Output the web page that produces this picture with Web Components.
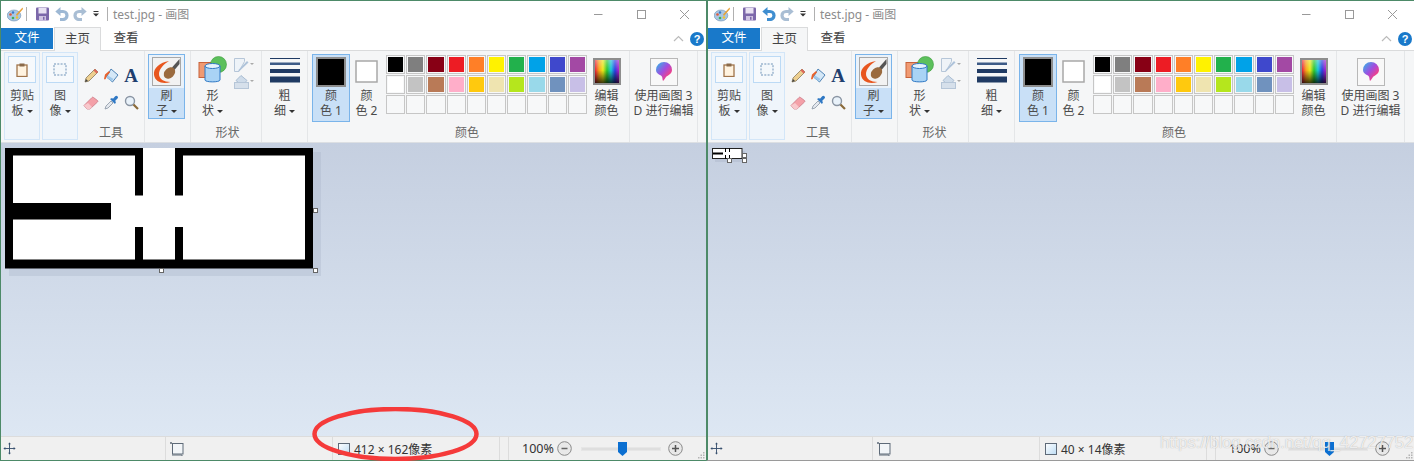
<!DOCTYPE html>
<html lang="zh">
<head>
<meta charset="utf-8">
<title>test.jpg - 画图</title>
<style>
	html, body {
		margin: 0;
		height: 461px;
		overflow: hidden;
		background: #fff;
		font-family: "Noto Sans", "Noto Sans CJK SC", sans-serif;
	}
	body {
		display: flex;
		position: relative;
		width: 1414px;
	}
	.mark {
		position: absolute;
		left: 312px;
		top: 407px;
		pointer-events: none;
	}
	.water {
		position: absolute;
		left: 1160px;
		top: 432px;
		font: 16.5px/20px "Liberation Sans", sans-serif;
		color: rgba(255, 255, 255, .78);
		text-shadow: 0 0 1px rgba(120, 120, 120, .6);
		white-space: nowrap;
	}
</style>
</head>
<body>
	<paint-window size="412 × 162像素" img-w="308" img-h="120" style="width:706px;--edge:1px;--foot:#4d8a68;--undo:#9db8d4">
		<svg slot="canvas" width="316" height="128" viewBox="0 0 316 128">
			<rect x="4" y="4" width="312" height="124" fill="#a9b4c8" opacity=".35"/>
			<rect width="308" height="120.500" fill="#000"/>
			<rect x="8" y="7.500" width="292" height="104" fill="#fff"/>
			<rect x="130" y="0" width="8" height="47.500"/>
			<rect x="170" y="0" width="8" height="47.500"/>
			<rect x="130" y="79" width="8" height="35"/>
			<rect x="170" y="79" width="8" height="35"/>
			<rect x="138" y="0" width="32" height="8" fill="#fff"/>
			<rect x="0" y="55" width="106" height="16.500"/>
		</svg>
	</paint-window>
	<paint-window size="40 × 14像素" img-w="30" img-h="10" style="width:708px;--edge:2px;--foot:#9a9a9a;--undo:#3f8ed0">
		<svg slot="canvas" width="36" height="14" viewBox="0 0 36 14">
			<rect x="3" y="3" width="30" height="11" fill="#a9b4c8" opacity=".4"/>
			<rect x=".5" y=".5" width="29.500" height="10" fill="#fff" stroke="#222" stroke-width="1"/>
			<rect x="1" y="4.500" width="10" height="2" fill="#000"/>
			<rect x="13" y="0" width="1" height="4" fill="#000"/>
			<rect x="17" y="0" width="1" height="4" fill="#000"/>
			<rect x="13" y="7" width="1" height="4" fill="#000"/>
			<rect x="17" y="7" width="1" height="4" fill="#000"/>
		</svg>
	</paint-window>

	<svg class="mark" width="168" height="54" viewBox="0 0 168 54">
		<ellipse cx="83.500" cy="27" rx="81" ry="25" fill="none" stroke="#f53a3a" stroke-width="4.500"/>
	</svg>
	<div class="water">https://blog.csdn.net/qq_42727752</div>

<template id="tpl-caret">
	<style>
		:host {
			display: inline-block;
			width: 0;
			height: 0;
			margin-left: 3px;
			vertical-align: 2px;
			border: 3px solid transparent;
			border-top-color: #333;
			border-bottom-width: 0;
		}
	</style>
</template>

<template id="tpl-btn">
	<style>
		:host {
			display: flex;
			flex-direction: column;
			align-items: center;
			box-sizing: border-box;
			flex: none;
			border: 1px solid transparent;
			font-size: 12px;
			line-height: 15px;
			color: #4a4a4a;
		}
		.icon {
			display: flex;
			align-items: center;
			justify-content: center;
			box-sizing: border-box;
			height: 33px;
			width: 100%;
		}
		.text {
			width: 100%;
			text-align: center;
			white-space: nowrap;
		}
		:host([variant=panel]) {
			height: 88px;
			margin-top: 1px;
			padding-top: 2px;
			border-color: #d3e6f8;
			background: #eff5fb;
		}
		:host([variant=panel]) .icon {
			width: 28px;
			height: 27px;
			margin: 1px 0 5px;
			border: 1px solid #bcdaf5;
			background: #f6f9fc;
		}
		:host([variant=active]) {
			border-color: #7ab4ea;
			background: #eaf2fa;
		}
		:host([variant=active]) .text {
			background: #c9e0f7;
		}
		:host([variant=selected]) {
			border-color: #7ab4ea;
			background: #c9e0f7;
			padding-bottom: 3px;
		}
	</style>
	<div class="icon"><slot name="icon"></slot></div>
	<div class="text"><slot></slot></div>
</template>

<template id="tpl-group">
	<style>
		:host {
			display: flex;
			flex-direction: column;
			box-sizing: border-box;
			flex: none;
			height: 100%;
			padding: 3px 0 1px;
			border-right: 1px solid #e4e6e8;
		}
		.body {
			display: flex;
			flex: 1;
			min-height: 0;
		}
		.label {
			height: 16px;
			font-size: 12px;
			line-height: 16px;
			text-align: center;
			color: #666;
		}
	</style>
	<div class="body"><slot></slot></div>
	<div class="label"></div>
</template>

<template id="tpl-palette">
	<style>
		:host {
			display: grid;
			grid-template-columns: repeat(10, 1fr);
			grid-auto-rows: 19px;
			gap: 1px;
			width: 201px;
			height: 59px;
			flex: none;
			margin: 1px 0 0 3px;
		}
		div {
			box-sizing: border-box;
			border: 1px solid #c6c6c6;
			padding: 1px;
			background: #f7f8f9;
		}
		i {
			display: block;
			height: 100%;
		}
	</style>
</template>

<template id="tpl-status">
	<style>
		:host {
			display: flex;
			flex: none;
			height: 24px;
			box-sizing: border-box;
			border-top: 1px solid #dcdcdc;
			background: #f0f0f0;
			font-size: 12px;
			color: #333;
		}
		section {
			display: flex;
			align-items: center;
			box-sizing: border-box;
			flex: none;
			border-right: 1px solid #dcdcdc;
		}
		.a { width: 165px; padding-left: 2px; }
		.b { width: 167px; padding-left: 4px; }
		.c { width: 167px; padding-left: 4px; gap: 3px; }
		.d { width: 9px; }
		.e { flex: 1; border: 0; padding-left: 13px; position: relative; font-size: 12.5px; }
		.pct { width: 35px; }
		.track {
			position: relative;
			width: 80px;
			height: 4px;
			margin: 0 7px 0 9px;
			background: #dedede;
			border: 1px solid #e6e6e6;
			box-sizing: border-box;
		}
		.thumb {
			position: absolute;
			left: 36px;
			top: -6px;
		}
		.grip {
			position: absolute;
			right: 1px;
			bottom: 1px;
		}
	</style>
	<section class="a">
		<svg width="13" height="13" viewBox="0 0 14 14" fill="none" stroke="#38506e" stroke-width="1">
			<path d="M1 7h12M7 1v12"/>
			<path d="M7 .5 5.500 2.500h3zM7 13.500l-1.500-2h3zM.5 7l2-1.500v3zM13.500 7l-2-1.500v3z" fill="#38506e" stroke="none"/>
		</svg>
	</section>
	<section class="b">
		<svg width="14" height="14" viewBox="0 0 14 14" fill="none">
			<rect x="2.500" y="1.500" width="10.500" height="10.500" fill="#f2f5f8" stroke="#5e6a78"/>
			<path d="M1 0v2M0 1h2M12 13v1M2 13h10" stroke="#5e6a78"/>
		</svg>
	</section>
	<section class="c">
		<svg width="14" height="14" viewBox="0 0 14 14">
			<defs><linearGradient id="pg" x1="0" y1="0" x2="1" y2="1"><stop offset="0" stop-color="#fff"/><stop offset="1" stop-color="#bcdcf4"/></linearGradient></defs>
			<rect x="1.500" y="1.500" width="11" height="11" fill="url(#pg)" stroke="#5e6a78"/>
		</svg>
		<span class="size"></span>
	</section>
	<section class="d"></section>
	<section class="e">
		<span class="pct">100%</span>
		<svg width="15" height="15" viewBox="0 0 15 15" fill="#e8e8e8" stroke="#8a8a8a">
			<circle cx="7.500" cy="7.500" r="6.800"/>
			<path d="M4.500 7.500h6" stroke="#666" stroke-width="1.500"/>
		</svg>
		<div class="track">
			<svg class="thumb" width="9" height="14" viewBox="0 0 9 14"><path d="M0 0h9v10l-4.500 4L0 10z" fill="#0b6fd1"/></svg>
		</div>
		<svg width="15" height="15" viewBox="0 0 15 15" fill="#e8e8e8" stroke="#8a8a8a">
			<circle cx="7.500" cy="7.500" r="6.800"/>
			<path d="M4 7.500h7M7.500 4v7" stroke="#555" stroke-width="1.500"/>
		</svg>
		<svg class="grip" width="7" height="7" viewBox="0 0 7 7" fill="#b4b4b4">
			<rect x="5" y="0" width="1.500" height="1.500"/><rect x="2.500" y="2.500" width="1.500" height="1.500"/><rect x="5" y="2.500" width="1.500" height="1.500"/>
			<rect x="0" y="5" width="1.500" height="1.500"/><rect x="2.500" y="5" width="1.500" height="1.500"/><rect x="5" y="5" width="1.500" height="1.500"/>
		</svg>
	</section>
</template>

<template id="tpl-window">
	<style>
		:host {
			display: flex;
			flex-direction: column;
			flex: none;
			box-sizing: border-box;
			height: 461px;
			border-top: 1px solid #4d8a68;
			border-left: var(--edge) solid #4d8a68;
			border-bottom: 1px solid var(--foot);
			font-family: "Noto Sans", "Noto Sans CJK SC", sans-serif;
			background: #fff;
		}
		* { box-sizing: border-box; }
		.title {
			display: flex;
			align-items: center;
			flex: none;
			height: 26px;
			padding-left: 6px;
		}
		.title > svg { flex: none; }
		.sep { width: 1px; height: 14px; background: #b0b0b0; flex: none; }
		.name { font-size: 12px; color: #8c8c8c; margin-left: 5px; white-space: nowrap; }
		.ctrls { display: flex; margin-left: auto; }
		.ctrls div { width: 43px; height: 26px; display: flex; align-items: center; justify-content: center; }
		.tabs {
			display: flex;
			align-items: stretch;
			flex: none;
			height: 23px;
			font-size: 12.5px;
			line-height: 22px;
			color: #444;
		}
		.file {
			width: 52px;
			height: 21px;
			margin-top: 1px;
			background: #1979ca;
			color: #fff;
			text-align: center;
			line-height: 20px;
		}
		.home {
			width: 47px;
			margin-left: 1px;
			text-align: center;
			border: 1px solid #dadbdc;
			border-bottom: 0;
			background: #f5f6f7;
			position: relative;
			z-index: 1;
			height: 24px;
		}
		.view { width: 50px; text-align: center; }
		.tabr { margin-left: auto; display: flex; align-items: center; gap: 6px; padding-right: 2px; }
		.help {
			width: 14px;
			height: 14px;
			border-radius: 50%;
			background: #1979ca;
			color: #fff;
			font: bold 11px/14px "Liberation Sans", sans-serif;
			text-align: center;
		}
		.ribbon {
			display: flex;
			flex: none;
			height: 93px;
			padding-left: 3px;
			background: #f5f6f7;
			border-top: 1px solid #dadbdc;
			border-bottom: 1px solid #dcdfe3;
		}
		.tools {
			display: grid;
			grid-template-columns: repeat(3, 20px);
			grid-auto-rows: 27px;
			margin: 8px 0 0 3px;
			justify-items: center;
			align-items: center;
			height: 54px;
		}
		.bigA { font: bold 19px/1 "Liberation Serif", serif; color: #1f3f6f; }
		.small { display: flex; flex-direction: column; gap: 3px; margin: 4px 0 0 3px; }
		.rainbow {
			display: block;
			width: 28px;
			height: 27px;
			border: 2px solid #8d8d8d;
			background: linear-gradient(to bottom, rgba(255,255,255,.35), rgba(255,255,255,0) 45%, rgba(0,0,0,.75)), linear-gradient(to right, #e81c3c, #f7a11a, #e9e91a, #2cc42c, #18c6d8, #2a3fe0, #b41cc8);
		}
		.canvas {
			flex: 1;
			min-height: 0;
			padding: 5px 0 0 4px;
			display: flex;
			background: linear-gradient(to bottom, #c5cfe0, #dde7f3);
			overflow: hidden;
		}
		.sheet { position: relative; height: max-content; }
		.sheet ::slotted(svg) { display: block; }
		.handle {
			position: absolute;
			width: 5px;
			height: 5px;
			border: 1px solid #666;
			background: #fff;
		}
	</style>
	<div class="title">
		<svg width="16" height="15" viewBox="0 0 16 15">
			<ellipse cx="7" cy="8.500" rx="6.800" ry="5.500" fill="#a9c7e3" stroke="#6d8fb0" stroke-width=".6"/>
			<circle cx="3.500" cy="7.500" r="1.300" fill="#e0583a"/>
			<circle cx="6" cy="11" r="1.300" fill="#3fae5a"/>
			<circle cx="10" cy="10.500" r="1.300" fill="#f1c232"/>
			<circle cx="6" cy="5.500" r="1.200" fill="#3b78c8"/>
			<path d="M15.500 .5 9 7.500 10 9l6-7z" fill="#e8a23a"/>
		</svg>
		<div class="sep" style="margin-left:3px"></div>
		<svg style="margin-left:9px" width="13" height="14" viewBox="0 0 13 14">
			<rect x="0" y="0.500" width="13" height="13" rx="1" fill="#7c68aa"/>
			<rect x="2.500" y="1" width="8" height="5.500" fill="#e8e2f2"/>
			<rect x="3" y="9" width="7" height="4.500" fill="#cfc4e2"/>
			<rect x="7" y="9.800" width="1.500" height="3" fill="#7c68aa"/>
		</svg>
		<svg style="margin-left:6px" width="14" height="14" viewBox="0 0 14 14" fill="none" stroke="var(--undo)" stroke-width="3.200">
			<path d="M3 4.500h5a3.800 3.800 0 0 1 0 8H5"/>
			<path d="M5.500 0 .3 4.500 5.500 9z" fill="var(--undo)" stroke="none"/>
		</svg>
		<svg style="margin-left:4px" width="14" height="14" viewBox="0 0 14 14" fill="none" stroke="#a9bed4" stroke-width="3.200">
			<path d="M11 4.500H6a3.800 3.800 0 0 0 0 8h3"/>
			<path d="M8.500 0l5.200 4.500L8.500 9z" fill="#a9bed4" stroke="none"/>
		</svg>
		<svg style="margin-left:6px" width="7" height="6" viewBox="0 0 7 6" fill="#333">
			<rect x="0.500" y="0" width="5" height="1"/><path d="M0 2.500h6L3 5.500z"/>
		</svg>
		<div class="sep" style="margin-left:7px"></div>
		<span class="name">test.jpg - 画图</span>
		<div class="ctrls">
			<div><svg width="11" height="11" viewBox="0 0 11 11"><path d="M1 5.500h8.500" stroke="#999"/></svg></div>
			<div><svg width="11" height="11" viewBox="0 0 11 11"><rect x="1.500" y="1.500" width="8" height="8" fill="none" stroke="#999"/></svg></div>
			<div><svg width="11" height="11" viewBox="0 0 11 11"><path d="M1 1l9 9M10 1l-9 9" stroke="#999"/></svg></div>
		</div>
	</div>
	<div class="tabs">
		<div class="file">文件</div>
		<div class="home">主页</div>
		<div class="view">查看</div>
		<div class="tabr">
			<svg width="11" height="7" viewBox="0 0 11 7"><path d="M1 6l4.500-4.500L10 6" fill="none" stroke="#bbb" stroke-width="1.200"/></svg>
			<div class="help">?</div>
		</div>
	</div>
	<div class="ribbon">
		<ribbon-btn variant="panel" style="width:36px">
			<svg slot="icon" width="12" height="14" viewBox="0 0 12 14">
				<rect x="1" y="2" width="10" height="11.500" fill="#fff3e0" stroke="#a0744a" stroke-width="1.300"/>
				<rect x="3.500" y="0.500" width="5" height="3" fill="#8a6a4a"/>
			</svg>
			剪贴<br>板<drop-caret></drop-caret>
		</ribbon-btn>
		<ribbon-btn variant="panel" style="width:36px;margin-left:2px">
			<svg slot="icon" width="14" height="13" viewBox="0 0 14 13">
				<rect x="1" y="1" width="12" height="11" fill="#f4f8fb" stroke="#6f93b8" stroke-dasharray="2 1.300"/>
			</svg>
			图<br>像<drop-caret></drop-caret>
		</ribbon-btn>
		<ribbon-group label="工具" style="width:67px">
			<div class="tools">
				<svg width="15" height="15" viewBox="0 0 15 15">
					<path d="M1 14l1-4L11 1l3 3-9 9z" fill="#edcf8f" stroke="#8a7a5b" stroke-width=".8"/>
					<path d="M11 1l3 3-1.500 1.500-3-3z" fill="#e0685a"/>
					<path d="M1 14l1-3 2 2z" fill="#444"/>
				</svg>
				<svg width="16" height="15" viewBox="0 0 16 15">
					<path d="M8 1l7 6-5.500 7-6-5z" fill="#d5e8f7" stroke="#4f83b5"/>
					<path d="M5 7.500l5.500 3.500 -2 2.500-4.500-4z" fill="#9fc8ea"/>
					<path d="M6 3 2 6.500 1 11c1 1 2 0 2-1l1-2.500 3-3z" fill="#e8622c"/>
				</svg>
				<span class="bigA">A</span>
				<svg width="16" height="14" viewBox="0 0 16 14">
					<path d="M1 9.500 9 1.500c.5-.5 1-.5 1.500 0l4 3c.5.400.5 1 0 1.500L7 13H4z" fill="#f4a0a8" stroke="#c97a86" stroke-width=".8"/>
					<path d="M1 9.500 4 13h3l2-2-4-4z" fill="#f8c8cc"/>
				</svg>
				<svg width="15" height="15" viewBox="0 0 15 15">
					<path d="M1 14l1-3 5-5 2 2-5 5z" fill="#e4e8ee" stroke="#8a95a3" stroke-width=".8"/>
					<path d="M6 4l5 5 1-2-1-1 2.500-2.500a1.600 1.600 0 0 0-2.300-2.300L9 3.700 8 3z" fill="#2f78c4"/>
				</svg>
				<svg width="15" height="15" viewBox="0 0 15 15" fill="none">
					<circle cx="6" cy="6" r="4.500" fill="#e9f2fa" stroke="#8a95a3" stroke-width="1.400"/>
					<path d="M9.500 9.500 14 14" stroke="#8a6a3a" stroke-width="2.200"/>
				</svg>
			</div>
		</ribbon-group>
		<ribbon-group style="width:46px;padding-left:3px">
			<ribbon-btn variant="active" style="width:37px;height:65px">
				<svg slot="icon" width="29" height="29" viewBox="0 0 29 29">
					<rect x=".5" y=".5" width="28" height="28" fill="#f2f2f2" stroke="#a8a8a8"/>
					<path d="M27.500 2 20 10.500l2.500 2.500 5-6z" fill="#555"/>
					<ellipse cx="17.500" cy="16" rx="6.500" ry="4.800" transform="rotate(-45 17.500 16)" fill="#9a6a3e"/>
					<path d="M17 4C8 5.500 1 11 2 18c1 7 9 9.500 16.500 7C12 25 7 22 7 17c0-5 5-10 10-13z" fill="#e8561e"/>
				</svg>
				刷<br>子<drop-caret></drop-caret>
			</ribbon-btn>
		</ribbon-group>
		<ribbon-group label="形状" style="width:71px;padding-left:3px">
			<ribbon-btn style="width:37px">
				<svg slot="icon" width="29" height="29" viewBox="0 0 29 29" style="margin-top:-2px">
					<rect x="1" y="6.500" width="17" height="15" fill="#f09a72" stroke="#c8623a"/>
					<circle cx="20.500" cy="8.500" r="8" fill="#5cc05c" stroke="#3b9a3b" stroke-width=".6"/>
					<path d="M7 10v14c0 2.500 15 2.500 15 0V10z" fill="#a9d3f5" stroke="#2f78c4"/>
					<ellipse cx="14.500" cy="10" rx="7.500" ry="2.500" fill="#e4f2fd" stroke="#2f78c4"/>
				</svg>
				形<br>状<drop-caret></drop-caret>
			</ribbon-btn>
			<div class="small">
				<svg width="20" height="14" viewBox="0 0 20 14">
					<path d="M.5.5h10v3L5 13.500H.5z" fill="#eef3f8" stroke="#b6c6d8"/>
					<path d="M4 12.500 13 3l1.500 1.500L5.500 13z" fill="#aec3da"/>
					<path d="M16 5h4l-2 2z" fill="#aaa"/>
				</svg>
				<svg width="20" height="14" viewBox="0 0 20 14">
					<path d="M7 .5l6 5-5 5-6-5z" fill="#cfdcea" stroke="#a9bdd2"/>
					<rect x=".5" y="7.500" width="14" height="6" fill="#d6e0eb" stroke="#b6c6d8"/>
					<path d="M16 5h4l-2 2z" fill="#aaa"/>
				</svg>
			</div>
		</ribbon-group>
		<ribbon-group style="width:46px">
			<ribbon-btn style="width:45px">
				<svg slot="icon" width="30" height="26" viewBox="0 0 30 26" fill="#1f3a63" style="margin-top:-4px">
					<rect y="1" width="30" height="1"/>
					<rect y="5.500" width="30" height="2.500" fill="#3c5a86"/>
					<rect y="12" width="30" height="4"/>
					<rect y="19.500" width="30" height="6"/>
				</svg>
				粗<br>细<drop-caret></drop-caret>
			</ribbon-btn>
		</ribbon-group>
		<ribbon-group label="颜色" style="width:322px;padding-left:4px;padding-right:7px">
			<ribbon-btn variant="selected" style="width:38px;height:68px">
				<svg slot="icon" width="30" height="30" viewBox="0 0 30 30">
					<rect x="1" y="1" width="28" height="28" fill="#000" stroke="#8d8d8d" stroke-width="2"/>
				</svg>
				颜<br>色 1
			</ribbon-btn>
			<ribbon-btn style="width:33px">
				<svg slot="icon" width="23" height="23" viewBox="0 0 23 23">
					<rect x="1" y="1" width="21" height="21" fill="#fff" stroke="#a8a8a8" stroke-width="1.500"/>
				</svg>
				颜<br>色 2
			</ribbon-btn>
			<color-palette></color-palette>
			<ribbon-btn style="width:33px;margin-left:3px">
				<span slot="icon" class="rainbow"></span>
				编辑<br>颜色
			</ribbon-btn>
		</ribbon-group>
		<ribbon-group style="width:68px;padding-left:2px;padding-right:2px">
			<ribbon-btn style="width:63px">
				<svg slot="icon" width="28" height="28" viewBox="0 0 28 28">
					<defs>
						<linearGradient id="drop" x1="0" y1="0" x2="1" y2="1">
							<stop offset="0" stop-color="#27c0e8"/>
							<stop offset=".45" stop-color="#a04de0"/>
							<stop offset=".75" stop-color="#f0408a"/>
							<stop offset="1" stop-color="#f8a030"/>
						</linearGradient>
					</defs>
					<rect x=".5" y=".5" width="27" height="27" fill="#f8f8f8" stroke="#b8b8b8"/>
					<path d="M14 4a8 8 0 0 1 8 8c0 4-4 5-6 7-1 1-1.500 3-3 4-1-2 0-4-2-5.500C8 16 6 15 6 12a8 8 0 0 1 8-8z" fill="url(#drop)"/>
				</svg>
				使用画图 3<br>D 进行编辑
			</ribbon-btn>
		</ribbon-group>
	</div>
	<div class="canvas">
		<div class="sheet">
			<slot name="canvas"></slot>
			<span class="handle" data-h="r"></span>
			<span class="handle" data-h="b"></span>
			<span class="handle" data-h="c"></span>
		</div>
	</div>
	<status-bar></status-bar>
</template>

<script>
function shadowFrom(el, id) {
	el.attachShadow({ mode: 'open' });
	el.shadowRoot.appendChild(document.getElementById(id).content.cloneNode(true));
	return el.shadowRoot;
}

class DropCaret extends HTMLElement {
	constructor() {
		super();
		shadowFrom(this, 'tpl-caret');
	}
}

class RibbonBtn extends HTMLElement {
	constructor() {
		super();
		shadowFrom(this, 'tpl-btn');
	}
}

class RibbonGroup extends HTMLElement {
	constructor() {
		super();
		shadowFrom(this, 'tpl-group');
	}

	connectedCallback() {
		this.shadowRoot.querySelector('.label').textContent = this.getAttribute('label') || '';
	}
}

class ColorPalette extends HTMLElement {
	static colors = [
		'#000000', '#7f7f7f', '#880015', '#ed1c24', '#ff7f27', '#fff200', '#22b14c', '#00a2e8', '#3f48cc', '#a349a4',
		'#ffffff', '#c3c3c3', '#b97a57', '#ffaec9', '#ffc90e', '#efe4b0', '#b5e61d', '#99d9ea', '#7092be', '#c8bfe7'
	];

	constructor() {
		super();
		const root = shadowFrom(this, 'tpl-palette');
		for (let n = 0; n < 30; n++) {
			const cell = document.createElement('div');
			const color = ColorPalette.colors[n];
			if (color) {
				const fill = document.createElement('i');
				fill.style.background = color;
				cell.appendChild(fill);
			}
			root.appendChild(cell);
		}
	}
}

class StatusBar extends HTMLElement {
	constructor() {
		super();
		shadowFrom(this, 'tpl-status');
	}

	set size(val) {
		this.shadowRoot.querySelector('.size').textContent = val;
	}
}

class PaintWindow extends HTMLElement {
	constructor() {
		super();
		shadowFrom(this, 'tpl-window');
	}

	connectedCallback() {
		this.shadowRoot.querySelector('status-bar').size = this.getAttribute('size');
		// grab handles sit on the image's right and bottom edges
		const w = parseFloat(this.getAttribute('img-w'));
		const h = parseFloat(this.getAttribute('img-h'));
		const place = { r: [w, h / 2], b: [w / 2, h], c: [w, h] };
		this.shadowRoot.querySelectorAll('.handle').forEach((el) => {
			const [x, y] = place[el.dataset.h];
			el.style.left = x + 'px';
			el.style.top = y + 'px';
		});
	}
}

customElements.define('drop-caret', DropCaret);
customElements.define('ribbon-btn', RibbonBtn);
customElements.define('ribbon-group', RibbonGroup);
customElements.define('color-palette', ColorPalette);
customElements.define('status-bar', StatusBar);
customElements.define('paint-window', PaintWindow);
</script>
</body>
</html>
